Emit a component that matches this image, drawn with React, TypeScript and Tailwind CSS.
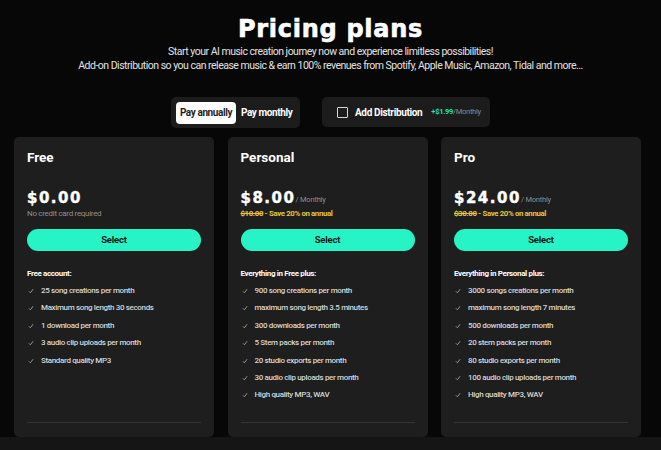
const plans = [
  {
    name: "Free",
    price: "$0.00",
    monthly: false,
    note: "No credit card required",
    heading: "Free account:",
    items: [
      "25 song creations per month",
      "Maximum song length 30 seconds",
      "1 download per month",
      "3 audio clip uploads per month",
      "Standard quality MP3",
    ],
  },
  {
    name: "Personal",
    price: "$8.00",
    monthly: true,
    old: "$10.00",
    heading: "Everything in Free plus:",
    items: [
      "900 song creations per month",
      "maximum song length 3.5 minutes",
      "300 downloads per month",
      "5 Stem packs per month",
      "20 studio exports per month",
      "30 audio clip uploads per month",
      "High quality MP3, WAV",
    ],
  },
  {
    name: "Pro",
    price: "$24.00",
    monthly: true,
    old: "$30.00",
    heading: "Everything in Personal plus:",
    items: [
      "3000 songs creations per month",
      "maximum song length 7 minutes",
      "500 downloads per month",
      "20 stem packs per month",
      "80 studio exports per month",
      "100 audio clip uploads per month",
      "High quality MP3, WAV",
    ],
  },
];

const display = { fontFamily: '"DejaVu Sans", sans-serif' };

function Check() {
  return (
    <svg width="6" height="6" viewBox="0 0 10 10" className="shrink-0">
      <path d="M1.5 5.5 L4 8 L8.5 2" fill="none" stroke="#a8a8a8" strokeWidth="1.4" />
    </svg>
  );
}

function PlanCard({ plan }: { plan: (typeof plans)[number] }) {
  return (
    <div className="flex h-[300px] w-[200px] flex-col rounded-[5px] bg-[#1e1e1e] px-[13px] pt-[11px]">
      <h3 className="text-[13.5px] font-bold leading-[18px] text-white">{plan.name}</h3>
      <div className="mt-[22px] flex h-[20px] items-end">
        <span
          className="text-[15px] font-bold leading-[20px] tracking-[0.1em] text-white [-webkit-text-stroke:0.4px_white]"
          style={display}
        >
          {plan.price}
        </span>
        {plan.monthly && (
          <span className="mb-[3px] text-[7.5px] leading-[10px] tracking-[-0.2px] text-[#8d8d8d]">/ Monthly</span>
        )}
      </div>
      {plan.note ? (
        <p className="text-[8px] leading-[12px] tracking-[-0.3px] text-[#8e8e8e]">{plan.note}</p>
      ) : (
        <p className="text-[7.8px] font-bold leading-[12px] tracking-[-0.35px] text-[#e2c73c]">
          <span className="line-through">{plan.old}</span> - Save 20% on annual
        </p>
      )}
      <button className="mt-[9px] h-[22px] w-full rounded-full bg-[#26f4c6] text-[9.5px] font-bold tracking-[-0.2px] text-[#151515]">
        Select
      </button>
      <p className="mt-[17px] text-[8px] font-bold leading-[12px] tracking-[-0.35px] text-white">{plan.heading}</p>
      <ul className="mt-[5px] flex flex-col gap-[5.4px]">
        {plan.items.map((item) => (
          <li
            key={item}
            className="flex items-center gap-[7px] pl-[1px] text-[8px] font-medium leading-[12px] tracking-[-0.35px] text-[#d6d6d6]"
          >
            <Check />
            {item}
          </li>
        ))}
      </ul>
      <div className="mb-[14px] mt-auto h-px bg-[#343434]" />
    </div>
  );
}

export default function App() {
  return (
    <div
      className="flex min-h-[450px] flex-col bg-[#070707] text-white"
      style={{ fontFamily: 'Roboto, "Liberation Sans", sans-serif' }}
    >
      <header className="flex flex-col items-center pt-[15px]">
        <h1
          className="text-[24px] font-bold leading-[28px] tracking-[0.03em] [-webkit-text-stroke:0.6px_white]"
          style={display}
        >
          Pricing plans
        </h1>
        <p className="mt-[2px] text-center text-[10.5px] leading-[14px] tracking-[-0.5px] text-[#e2e2e2]">
          Start your AI music creation journey now and experience limitless possibilities!
          <br />
          Add-on Distribution so you can release music &amp; earn 100% revenues from Spotify, Apple Music, Amazon, Tidal and more...
        </p>
        <div className="mt-[24px] flex gap-[22px]">
          <div className="flex h-[31px] w-[129px] items-center gap-[5px] whitespace-nowrap rounded-[5px] bg-[#1c1c1c] px-[5px]">
            <span className="flex h-[22px] w-[60px] items-center justify-center rounded-[4px] bg-white text-[10px] font-bold tracking-[-0.4px] text-[#1e1e1e]">
              Pay annually
            </span>
            <span className="text-[10px] font-bold tracking-[-0.4px] text-white">Pay monthly</span>
          </div>
          <div className="flex h-[30px] w-[168px] items-center whitespace-nowrap rounded-[5px] bg-[#1c1c1c] pl-[15px]">
            <span className="h-[11px] w-[11px] shrink-0 rounded-[1px] border-[1.5px] border-[#d8d8d8]" />
            <span className="ml-[7px] text-[10px] font-bold tracking-[-0.35px] text-white">Add Distribution</span>
            <span className="ml-[9px] text-[7.5px] font-bold tracking-[-0.3px] text-[#22e0b4]">
              +$1.99<span className="font-normal text-[#8a8a8a]">/Monthly</span>
            </span>
          </div>
        </div>
      </header>
      <main className="mt-[9px] flex justify-center gap-[13.5px] pr-[6px]">
        {plans.map((plan) => (
          <PlanCard key={plan.name} plan={plan} />
        ))}
      </main>
      <div className="h-[13px] bg-[#151515]" />
    </div>
  );
}
